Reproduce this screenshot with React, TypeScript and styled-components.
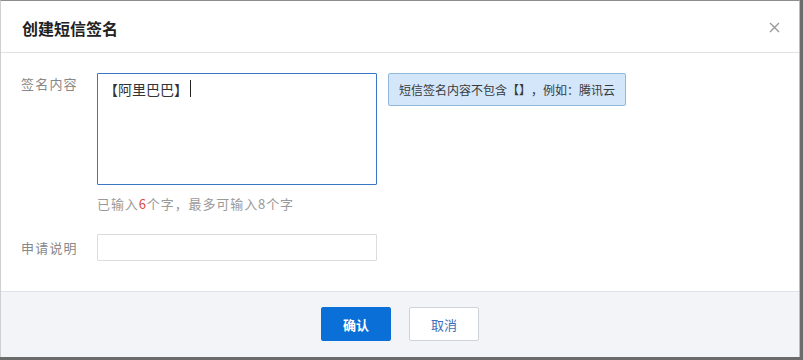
import React from 'react';
import styled, { createGlobalStyle } from 'styled-components';

const GlobalStyle = createGlobalStyle`
  html, body {
    margin: 0;
    padding: 0;
    background: #6b6b6b;
    height: 360px;
    overflow: hidden;
  }
  * {
    box-sizing: border-box;
  }
  body {
    font-family: "Noto Sans CJK SC", "Noto Sans", "Liberation Sans", sans-serif;
    text-spacing-trim: space-all;
  }
`;

export default function App() {
  return (
    <>
      <GlobalStyle />
      <Dialog>
        <Header>
          <Title>创建短信签名</Title>
          <CloseButton aria-label="关闭">
            <svg width="11" height="11" viewBox="0 0 11 11">
              <path d="M1 1L10 10M10 1L1 10" stroke="#999" strokeWidth="1.4" />
            </svg>
          </CloseButton>
        </Header>

        <Body>
          <Row>
            <Label>签名内容</Label>
            <Field>
              <TextArea>
                【阿里巴巴】
                <Caret />
              </TextArea>
              <Hint>
                已输入<Count>6</Count>个字，最多可输入8个字
              </Hint>
            </Field>
            <Tip>短信签名内容不包含【】，例如：腾讯云</Tip>
          </Row>

          <Row inline>
            <Label inline>申请说明</Label>
            <Input type="text" />
          </Row>
        </Body>

        <Footer>
          <PrimaryButton>确认</PrimaryButton>
          <DefaultButton>取消</DefaultButton>
        </Footer>
      </Dialog>
    </>
  );
}

const Dialog = styled.div`
  width: 800px;
  height: 357px;
  background: #fff;
  border-top: 1px solid #8c8c8c;
  border-left: 1px solid #cfcfcf;
  border-right: 1px solid #bdbdbd;
  display: flex;
  flex-direction: column;
`;

const Header = styled.div`
  height: 52px;
  flex-shrink: 0;
  display: flex;
  align-items: center;
  justify-content: space-between;
  padding: 0 18px 0 21px;
  border-bottom: 1px solid #e2e2e2;
`;

const Title = styled.div`
  font-size: 16px;
  font-weight: bold;
  color: #222;
  line-height: 20px;
  margin-top: 2px;
`;

const CloseButton = styled.button`
  border: none;
  background: none;
  padding: 0;
  width: 14px;
  height: 14px;
  display: flex;
  align-items: center;
  justify-content: center;
  cursor: pointer;
  margin-top: 1px;
`;

const Body = styled.div`
  flex: 1;
  padding: 20px 0 0 20px;
  display: flex;
  flex-direction: column;
  gap: 21px;
`;

const Row = styled.div<{ inline?: boolean }>`
  display: flex;
  align-items: ${({ inline }) => (inline ? 'center' : 'flex-start')};
`;

const Label = styled.div<{ inline?: boolean }>`
  width: 76px;
  flex-shrink: 0;
  font-size: 13px;
  color: #888;
  line-height: 18px;
  padding-top: ${({ inline }) => (inline ? '0' : '2px')};
  letter-spacing: 1.2px;
`;

const Field = styled.div`
  display: flex;
  flex-direction: column;
`;

const TextArea = styled.div`
  width: 280px;
  height: 112px;
  border: 1px solid #3a77c2;
  border-radius: 1px;
  padding: 6px 6px;
  font-size: 14px;
  line-height: 18px;
  color: #333;
  display: flex;
  align-items: flex-start;
`;

const Caret = styled.span`
  display: inline-block;
  width: 1px;
  height: 17px;
  background: #222;
  margin-left: 2px;
`;

const Hint = styled.div`
  margin-top: 10px;
  font-size: 13px;
  line-height: 18px;
  color: #9a9a9a;
  letter-spacing: 0.9px;
`;

const Count = styled.span`
  color: #e0463f;
`;

const Tip = styled.div`
  margin-left: 11px;
  height: 33px;
  padding: 0 10px;
  display: flex;
  align-items: center;
  background: #d3e6fa;
  border: 1px solid #93b8dd;
  border-radius: 2px;
  font-size: 12px;
  color: #3a3a3a;
  white-space: nowrap;
`;

const Input = styled.input`
  width: 280px;
  height: 27px;
  border: 1px solid #dcdcdc;
  border-radius: 1px;
  outline: none;
  padding: 0 8px;
  font-size: 13px;
  background: #fff;
`;

const Footer = styled.div`
  height: 66px;
  flex-shrink: 0;
  background: #f2f4f7;
  border-top: 1px solid #dde2e8;
  display: flex;
  align-items: center;
  justify-content: center;
  gap: 18px;
  padding-bottom: 1px;
`;

const Button = styled.button`
  width: 70px;
  height: 34px;
  border-radius: 2px;
  font-family: inherit;
  font-size: 13px;
  cursor: pointer;
  padding: 0;
`;

const PrimaryButton = styled(Button)`
  background: #0a6fd6;
  border: 1px solid #0a6fd6;
  color: #fff;
  font-weight: bold;
`;

const DefaultButton = styled(Button)`
  background: #fff;
  border: 1px solid #cfd4da;
  color: #3d6fb8;
`;
